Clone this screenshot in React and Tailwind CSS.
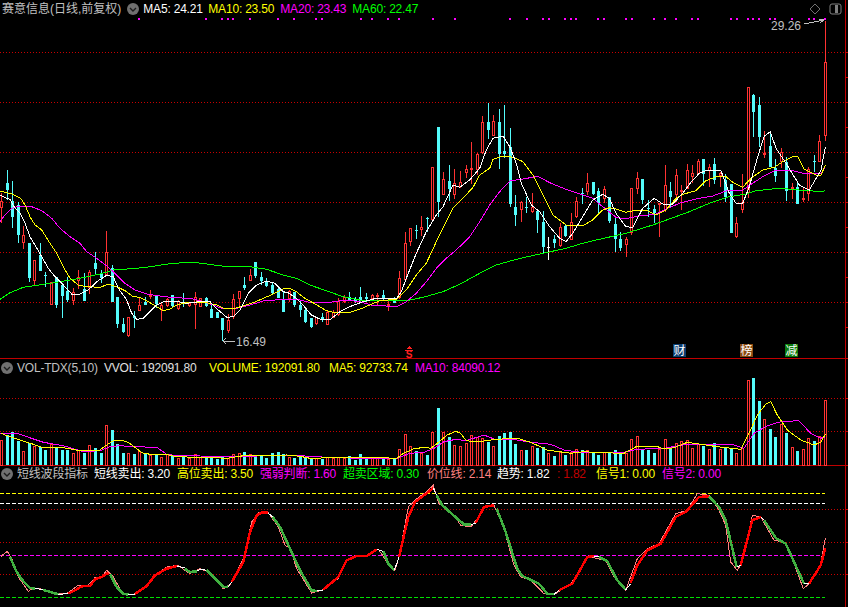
const STEP = 5.53

// candle data, [body top, body bottom, high, low, colour], read off in 3x zoom units
const CANDLES_A = [
  [92, 114, 70, 160, 'r'], [40, 60, 0, 90, 'c'], [92, 140, 32, 175, 'c'], [105, 195, 95, 218, 'c'], [195, 218, 168, 236, 'r'],
  [218, 325, 218, 335, 'c'], [270, 332, 270, 348, 'r'], [255, 303, 220, 303, 'c'], [315, 318, 305, 352, 'c'], [335, 404, 335, 404, 'r'],
  [320, 404, 320, 415, 'c'], [345, 378, 340, 445, 'c'], [362, 390, 320, 395, 'c'], [365, 392, 355, 405, 'r'], [320, 332, 300, 358, 'r'],
  [357, 392, 310, 392, 'c'], [307, 355, 300, 372, 'r'], [280, 296, 245, 312, 'c'], [310, 325, 300, 340, 'c'], [247, 315, 183, 318, 'r'],
  [295, 397, 285, 397, 'c'], [382, 462, 382, 475, 'c'], [462, 485, 445, 490, 'c'], [442, 497, 442, 500, 'r'], [437, 445, 422, 473, 'c'],
  [405, 422, 380, 422, 'r'], [395, 405, 380, 405, 'c'], [376, 380, 360, 388, 'r'], [376, 402, 376, 415, 'c'], [404, 420, 395, 452, 'r'],
  [388, 408, 385, 410, 'r'], [376, 408, 376, 410, 'c'], [392, 418, 390, 420, 'r'], [395, 400, 370, 412, 'c'], [398, 407, 395, 410, 'r'],
  [382, 405, 366, 476, 'r'], [385, 410, 383, 412, 'r'], [383, 408, 380, 410, 'c'], [416, 443, 403, 445, 'c'], [426, 443, 426, 445, 'c'],
  [443, 480, 443, 513, 'c'], [450, 482, 432, 490, 'r'], [388, 442, 372, 446, 'r'], [364, 386, 364, 410, 'r'], [345, 353, 320, 360, 'c'],
  [315, 332, 297, 332, 'r'], [277, 318, 277, 325, 'c'], [320, 332, 305, 345, 'c'], [332, 347, 325, 352, 'c'], [345, 370, 340, 375, 'c'],
  [358, 383, 350, 385, 'c'],
]
const CANDLES_B = [
  [600, 636, 575, 636, 'c'], [572, 597, 570, 605, 'r'], [577, 615, 575, 620, 'c'], [615, 630, 600, 652, 'c'], [630, 666, 620, 670, 'c'],
  [655, 680, 655, 684, 'c'], [652, 672, 650, 675, 'r'], [652, 660, 640, 665, 'c'], [635, 674, 632, 675, 'r'], [636, 655, 630, 655, 'r'],
  [602, 646, 595, 648, 'r'], [590, 605, 585, 608, 'r'], [590, 600, 575, 603, 'c'], [597, 605, 590, 610, 'c'], [592, 603, 560, 610, 'c'],
  [590, 596, 578, 605, 'c'], [586, 597, 582, 600, 'r'], [585, 592, 578, 618, 'r'], [586, 597, 570, 600, 'c'], [612, 618, 600, 632, 'r'],
  [600, 608, 590, 610, 'c'], [534, 595, 513, 597, 'r'], [430, 540, 396, 542, 'r'], [385, 425, 385, 438, 'r'], [390, 394, 376, 416, 'c'],
  [381, 389, 348, 408, 'r'], [354, 357, 350, 395, 'c'], [202, 360, 202, 362, 'r'], [82, 305, 82, 350, 'c'], [238, 285, 215, 286, 'r'],
  [242, 268, 195, 303, 'c'], [248, 285, 207, 298, 'r'], [245, 260, 212, 265, 'r'], [207, 218, 195, 235, 'r'], [205, 210, 127, 252, 'r'],
  [163, 210, 158, 225, 'r'], [66, 160, 48, 162, 'r'], [66, 90, 10, 118, 'c'], [64, 107, 45, 107, 'r'], [66, 162, 27, 207, 'c'],
  [153, 163, 15, 175, 'c'], [142, 312, 85, 320, 'c'], [320, 345, 285, 378, 'c'], [306, 330, 302, 365, 'r'], [320, 323, 290, 340, 'c'],
  [320, 335, 280, 340, 'r'], [333, 360, 330, 400, 'c'], [365, 440, 333, 458, 'c'], [440, 442, 412, 480, 'w'], [417, 430, 405, 445, 'c'],
  [382, 438, 368, 440, 'r'], [378, 408, 372, 410, 'c'],
]
const CANDLES_C = [
  [487, 540, 458, 540, 'r'], [423, 472, 410, 475, 'r'], [400, 403, 385, 432, 'c'], [370, 397, 340, 405, 'r'], [367, 402, 367, 405, 'c'],
  [393, 428, 385, 465, 'c'], [388, 418, 378, 430, 'r'], [412, 483, 412, 490, 'c'], [492, 537, 470, 575, 'c'], [537, 565, 517, 573, 'c'],
  [537, 556, 530, 590, 'r'], [385, 520, 385, 525, 'r'], [355, 386, 335, 402, 'r'], [357, 420, 357, 432, 'c'], [445, 448, 420, 470, 'c'],
  [447, 460, 435, 490, 'c'], [430, 436, 430, 530, 'r'], [376, 450, 316, 455, 'r'], [393, 410, 366, 440, 'c'], [346, 406, 327, 425, 'r'],
  [390, 395, 376, 450, 'r'], [330, 386, 312, 388, 'r'], [340, 350, 315, 370, 'r'], [303, 343, 297, 345, 'r'], [298, 343, 298, 378, 'c'],
  [320, 332, 313, 382, 'r'], [312, 360, 295, 372, 'c'], [340, 348, 335, 380, 'r'], [360, 410, 342, 425, 'c'], [372, 518, 372, 518, 'c'],
  [489, 530, 472, 533, 'r'], [430, 450, 343, 458, 'r'], [80, 400, 80, 413, 'r'], [105, 155, 103, 232, 'c'], [135, 230, 112, 262, 'c'],
  [280, 285, 213, 295, 'r'], [258, 322, 222, 322, 'c'], [325, 347, 297, 365, 'c'], [275, 305, 265, 325, 'r'], [305, 392, 292, 422, 'c'],
  [382, 387, 370, 418, 'r'], [380, 433, 368, 433, 'c'], [415, 418, 380, 425, 'r'], [328, 402, 320, 423, 'r'], [302, 305, 285, 335, 'c'],
  [244, 305, 225, 306, 'r'], [7, 228, -117, 242, 'r'],
]

const toPx = (list, off) => list.map(([a, b, c, d, k]) => [off + a / 3, off + b / 3, off + c / 3, off + d / 3, k])
const CANDLES = [...toPx(CANDLES_A, 170), ...toPx(CANDLES_B, 100), ...toPx(CANDLES_C, 60)]

const VOLUMES = [
  'r255', 'c240', 'c232', 'c258', 'r288', 'c263', 'r272', 'c275', 'c285', 'r268', 'c280', 'c285', 'c285', 'r293', 'r285', 'c293', 'r270', 'c280', 'c293', 'r210',
  'c225', 'c268', 'c293', 'r295', 'c297', 'r288', 'c298', 'r300', 'c298', 'r305', 'r298', 'c303', 'r310', 'c305', 'r308', 'r297', 'r305', 'c308', 'c305', 'c312',
  'c305', 'r310', 'r297', 'r295', 'c291', 'r298', 'c303', 'c300', 'c308', 'c295', 'c291', 'c298', 'r305', 'c310', 'c305', 'c308', 'c312', 'r310', 'c312', 'r305',
  'r310', 'r307', 'r310', 'c303', 'c315', 'c298', 'c310', 'r310', 'r310', 'c310', 'r312', 'c310', 'r283', 'r237', 'r273', 'c288', 'r295', 'c300', 'r230', 'c158',
  'r230', 'c245', 'r270', 'r273', 'r264', 'r240', 'r245', 'r250', 'c260', 'r273', 'c243', 'c233', 'c230', 'c267', 'r285', 'c285', 'r272', 'c280', 'c276', 'r293',
  'c303', 'r290', 'c300', 'r290', 'r282', 'c285', 'r285', 'c294', 'c300', 'r292', 'c292', 'c285', 'c295', 'r293', 'r252', 'r243', 'c285', 'c285', 'c293', 'r283',
  'r252', 'c280', 'r265', 'r258', 'r255', 'r278', 'r268', 'c272', 'r282', 'c265', 'r282', 'c278', 'c278', 'r295', 'r280', 'r75', 'c68', 'c138', 'r192', 'c222',
  'c245', 'r208', 'c233', 'r277', 'c288', 'r283', 'r250', 'c258', 'r243', 'r135',
]

// polylines in zoom units too: [x offset, y offset, points]
const pts = (xo, yo, str) =>
  str.split(' ').map((p) => {
    const [x, y] = p.split(',').map(Number)
    return `${(xo + x / 3).toFixed(1)},${(yo + y / 3).toFixed(1)}`
  })
const line = (...parts) => parts.flatMap(([xo, yo, s]) => pts(xo, yo, s)).join(' ')

const MA5 = line(
  [0, 170, '0,75 15,83 30,88 45,115 60,130 75,160 90,200 105,225 125,260 145,295 165,320 190,345 215,372 240,372 265,360 290,335 320,316 340,320 355,355 380,390 395,430 410,448 430,445 450,425 470,405 490,395 530,394 560,400 600,395 630,395 655,420 680,442 700,440 720,420 745,370 770,345 800,333 825,340 849,365'],
  [283, 100, '15,578 40,595 60,615 85,645 110,657 140,660 170,635 200,620 240,605 280,595 340,597 355,575 370,535 400,460 430,395 460,345 480,320 510,255 530,262 560,240 590,205 610,150 630,115 660,108 680,140 700,190 715,250 745,315 770,335 800,380 830,415 849,425'],
  [566, 60, '20,520 50,470 80,420 110,403 130,415 150,460 180,500 200,502 230,445 265,415 290,432 320,432 350,400 375,367 400,340 425,330 465,332 490,400 510,430 530,430 550,380 575,290 595,228 613,215 630,265 660,310 700,375 730,390 765,330 778,262'],
)
const MA10 = line(
  [0, 170, '0,63 35,72 62,85 75,105 90,140 105,165 125,180 150,220 170,250 190,290 210,325 235,345 260,350 300,352 325,343 350,350 375,362 400,380 420,382 450,398 470,410 490,422 510,417 530,405 560,398 590,396 620,398 650,405 670,415 700,416 730,408 760,398 790,385 820,372 849,357'],
  [283, 100, '20,565 40,575 70,598 90,608 130,632 150,637 200,637 230,628 260,615 290,602 340,598 370,570 400,525 430,490 460,425 490,365 510,325 540,295 570,262 590,225 620,205 630,178 660,168 690,172 720,185 750,225 780,285 810,345 849,375'],
  [566, 60, '50,497 80,480 110,450 130,443 150,447 180,457 210,450 240,450 270,465 300,450 330,415 350,403 390,392 420,362 450,350 480,350 500,367 530,382 555,355 590,330 625,322 650,305 680,290 695,290 715,328 750,345 765,345 778,316'],
)
const MA20 = line(
  [0, 170, '0,155 15,135 35,115 60,108 95,110 125,122 155,145 180,175 210,200 240,220 260,245 290,265 320,288 345,310 375,340 405,360 440,372 480,378 520,383 570,385 600,392 640,405 670,417 710,415 750,405 790,393 849,388'],
  [283, 100, '50,600 85,608 140,607 190,600 230,605 265,615 340,620 370,605 400,580 430,545 460,505 490,475 520,450 560,410 590,365 620,315 650,275 680,243 720,237 765,229 800,248 849,268'],
  [566, 60, '50,405 80,415 110,440 150,472 175,477 220,468 270,462 300,447 345,428 400,415 440,408 480,393 530,390 560,370 590,350 630,330 680,332 720,342 765,340 778,320'],
)
const MA60 = line(
  [0, 170, '0,388 30,368 70,352 130,343 180,335 240,325 300,312 340,300 380,297 430,293 470,287 520,280 580,277 620,282 680,290 750,290 800,298 849,315'],
  [283, 100, '40,535 80,555 130,572 180,590 230,600 300,602 370,602 420,592 480,575 530,553 590,520 640,495 700,478 770,462 849,445'],
  [566, 60, '50,550 100,538 180,520 260,495 370,455 430,430 490,410 540,402 570,392 640,385 700,390 770,395 778,391'],
)
const VOL_MA5 = line(
  [0, 355, '3,235 15,240 40,248 70,258 100,268 130,278 190,278 240,287 300,285 320,270 340,257 370,257 385,262 405,277 425,293 450,298 500,298 520,303 560,306 600,306 680,310 720,304 740,300 790,300 820,302 860,300 900,304 930,310 1000,308 1060,307 1100,308 1140,308 1190,310 1210,295 1240,282'],
  [424, 355, '0,277 20,280 40,265 70,240 95,229 110,235 125,255 140,260 180,258 215,253 280,250 320,262 370,285 440,295 480,290 530,293 600,295 640,273 695,273 720,282 750,278 790,262 830,268 880,275 950,283 975,235 1000,180 1025,148 1040,140 1060,180 1090,225 1130,255 1170,270 1190,262 1204,238'],
)
const VOL_MA10 = line(
  [0, 355, '0,235 50,235 80,245 130,262 190,272 250,290 300,287 330,275 360,272 400,275 470,277 500,298 530,302 600,303 700,305 800,302 900,302 1000,308 1100,310 1190,310 1230,295'],
  [424, 355, '0,292 30,280 60,260 90,254 130,256 180,240 210,252 280,255 320,262 380,268 420,285 470,292 600,292 640,283 720,280 790,268 930,270 960,280 990,235 1030,212 1070,200 1125,197 1160,235 1190,250 1204,245'],
)
const SWING_THIN = line(
  [0, 462, '3,283 22,268 35,290 55,345 85,388 100,378 130,382 170,395 200,395 235,370 260,373 285,347 305,345 320,325 340,345 370,398 400,398 440,370 470,335 505,313 535,311 570,335 600,320 625,330 670,380 690,370 730,290 755,180 775,152 805,152 835,195 855,250 870,258 890,320 935,393 965,385 990,365 1015,350 1040,295 1070,282 1100,280 1135,262 1165,305 1185,325 1197,285 1225,135 1250,110'],
  [424, 462, '0,95 28,70 45,125 60,135 100,175 110,190 140,195 160,170 180,133 210,130 240,200 270,310 290,345 320,355 360,395 395,395 440,365 495,282 520,290 545,295 570,345 605,385 640,290 670,260 705,245 755,155 790,145 820,95 855,100 885,145 905,190 920,300 940,325 955,300 985,160 1010,165 1050,235 1080,240 1105,290 1138,380 1155,365 1190,305 1204,228'],
)

const RED = '#ff0000'
const GREEN = '#40b040'
const WHITE = '#ffffff'
// thick line of the indicator, one run per colour
const SWING_RUNS = [
  [0, GREEN, '30,285 50,330 70,358 90,378 105,380'], [0, WHITE, '105,380 130,382'], [0, GREEN, '130,384 175,397'], [0, WHITE, '175,397 205,395'],
  [0, RED, '205,395 225,385 245,373 270,372 285,352 305,345 325,332'], [0, GREEN, '330,337 350,375 370,395 385,398'], [0, WHITE, '385,398 405,396'],
  [0, RED, '405,396 440,372 465,340 500,320 530,312'], [0, WHITE, '530,312 555,318'], [0, GREEN, '555,320 570,330 590,328'], [0, WHITE, '590,328 600,322 620,325'],
  [0, GREEN, '620,325 650,355 670,375 685,374'], [0, WHITE, '685,374 695,360'], [0, RED, '695,360 730,300 750,210 770,160 785,152 803,152'], [0, WHITE, '803,152 818,165'],
  [0, GREEN, '818,165 840,195 870,260 900,325 935,385 950,387'], [0, WHITE, '950,387 970,385'], [0, RED, '970,383 1015,345 1040,295 1070,282 1100,282 1130,262'], [0, WHITE, '1130,262 1150,268'],
  [0, GREEN, '1150,268 1165,305 1183,325'], [0, WHITE, '1183,325 1197,285'], [0, RED, '1197,285 1225,165 1245,120 1272,100'],
  [424, RED, '0,100 28,78'], [424, WHITE, '28,78 38,100'], [424, GREEN, '38,100 55,130 100,170 120,187 140,188'], [424, WHITE, '140,188 155,183'],
  [424, RED, '155,183 180,135 210,130'], [424, GREEN, '218,140 245,210 280,320 295,342 345,365 370,395 390,397'], [424, WHITE, '390,397 405,385'],
  [424, RED, '405,385 445,365 490,285 510,282'], [424, WHITE, '510,282 525,285'], [424, GREEN, '525,285 550,298 580,355 605,383'], [424, WHITE, '605,383 620,365'],
  [424, RED, '620,362 640,310 670,265 710,245 755,165 785,150 825,105 855,103'], [424, GREEN, '855,103 885,135 905,175 938,315'], [424, WHITE, '938,315 950,310'],
  [424, RED, '950,310 985,175 1010,165'], [424, WHITE, '1010,165 1020,175'], [424, GREEN, '1020,175 1055,228 1085,245 1140,365'], [424, WHITE, '1140,365 1155,365'],
  [424, RED, '1155,365 1190,310 1204,258'],
]

const EVENT_DOTS = [
  139, 206, 222, 228, 233, 250, 278, 294, 316, 322, 361, 372, 388, 399, 433, 455, 510, 527, 543, 549, 565, 571, 576, 598, 604, 626, 632, 654, 665, 676, 692, 698,
  731, 737, 748, 753, 759, 770, 775, 792, 809, 814, 825,
]

const GRID_RED = '#c80000'
const UP = '#ff3232'
const DOWN = '#54fcfc'

const barX = (i) => Math.round(1 + STEP * i)

function Chevron() {
  return (
    <svg width="12" height="12" viewBox="0 0 12 12" className="shrink-0">
      <circle cx="6" cy="6" r="6" fill="#707070" />
      <path d="M3 5 L6 8 L9 5" fill="none" stroke="#1c1c1c" strokeWidth="1.4" />
    </svg>
  )
}

function Grid({ ys, color = GRID_RED, dash = '1 2', x2 = 845 }) {
  return ys.map((y) => (
    <line key={y} x1="0" x2={x2} y1={y + 0.5} y2={y + 0.5} stroke={color} strokeDasharray={dash} />
  ))
}

function Ticks({ ys }) {
  return ys.map((y) => <rect key={y} x="846" y={y} width="2" height="1" fill={GRID_RED} />)
}

function Curve({ points, color, width = 1 }) {
  return <polyline points={points} fill="none" stroke={color} strokeWidth={width} />
}

function Candle({ c, i }) {
  const [top, bottom, high, low, kind] = c
  const x = barX(i)
  const t = Math.round(top)
  const h = Math.max(Math.round(bottom) - t, 1)
  const color = kind === 'r' ? UP : kind === 'c' ? DOWN : '#ffffff'
  return (
    <g>
      <rect x={x} y={Math.round(high)} width="1" height={Math.round(low) - Math.round(high)} fill={color} />
      {kind === 'r' ? (
        <rect x={x - 0.5} y={t + 0.5} width="2" height={Math.max(h - 1, 1)} fill="#000" stroke={color} />
      ) : (
        <rect x={x - 1} y={t} width="3" height={h} fill={color} />
      )}
    </g>
  )
}

function MarkerTag({ x, bg, children }) {
  return (
    <g>
      <rect x={x - 7} y="344" width="13" height="13" fill={bg} />
      <text x={x - 0.5} y="355" textAnchor="middle" fontSize="12" fill="#fff">
        {children}
      </text>
    </g>
  )
}

function PriceChart() {
  return (
    <svg width="845" height="341" viewBox="0 17 845 341" className="block overflow-visible" shapeRendering="crispEdges">
      <Grid ys={[52, 102, 152, 202, 252, 302]} />
      <Ticks ys={[52, 77, 102, 127, 152, 177, 202, 227, 252, 277, 302, 327]} />
      {EVENT_DOTS.map((x) => (
        <rect key={x} x={x - 1} y="18" width="2" height="2" fill="#ff00ff" />
      ))}
      {CANDLES.map((c, i) => (
        <Candle key={i} c={c} i={i} />
      ))}
      <Curve points={MA60} color="#00ff00" />
      <Curve points={MA20} color="#ff00ff" />
      <Curve points={MA10} color="#ffff00" />
      <Curve points={MA5} color="#ffffff" />

      <text x="771" y="30" fontSize="12" fill="#c0c0c0">29.26</text>
      <path d="M804 24 L824 20 M819 19 L824 20 L820 23" fill="none" stroke="#c0c0c0" />
      <text x="236" y="346" fontSize="12" fill="#c0c0c0">16.49</text>
      <path d="M223 341 L235 341 M226 338 L223 341 L226 344" fill="none" stroke="#c0c0c0" />

      <path d="M409 346 L412 349 L406 349 Z" fill="#ff2020" />
      <rect x="405" y="350" width="8" height="1" fill="#ff2020" />
      <text x="409" y="358" textAnchor="middle" fontSize="10" fontWeight="700" fill="#ff2020">S</text>
      <MarkerTag x={680} bg="#0b3d70">财</MarkerTag>
      <MarkerTag x={747} bg="#8a4a10">榜</MarkerTag>
      <MarkerTag x={792} bg="#0a7a0a">减</MarkerTag>
    </svg>
  )
}

function VolumeChart() {
  return (
    <svg width="845" height="90" viewBox="0 375 845 90" className="block overflow-visible" shapeRendering="crispEdges">
      <Grid ys={[398, 431]} />
      <Ticks ys={[398, 431]} />
      {VOLUMES.map((v, i) => {
        const kind = v[0]
        const top = Math.round(355 + Number(v.slice(1)) / 3)
        const x = barX(i)
        return kind === 'r' ? (
          <rect key={i} x={x - 0.5} y={top + 0.5} width="2" height={465 - top} fill="#000" stroke={UP} />
        ) : (
          <rect key={i} x={x - 1} y={top} width="3" height={465 - top} fill={DOWN} />
        )
      })}
      <Curve points={VOL_MA10} color="#ff00ff" />
      <Curve points={VOL_MA5} color="#ffff00" />
    </svg>
  )
}

function SwingChart() {
  return (
    <svg width="845" height="127" viewBox="0 480 845 127" className="block overflow-visible" shapeRendering="crispEdges">
      <Grid ys={[509, 542, 574]} />
      <Grid ys={[493]} color="#ffff00" dash="4 2" x2={825} />
      <Grid ys={[503]} color="#ffffff" dash="4 2" x2={825} />
      <Grid ys={[555]} color="#ff00ff" dash="4 2" x2={825} />
      <Grid ys={[597]} color="#00e000" dash="4 2" x2={825} />
      <Ticks ys={[509, 542, 574]} />
      <Curve points={SWING_THIN} color="#ff8080" />
      {SWING_RUNS.map(([xo, color, s], i) => (
        <Curve key={i} points={pts(xo, 462, s).join(' ')} color={color} width={color === WHITE ? 1 : 2.5} />
      ))}
    </svg>
  )
}

function Field({ color, width, children }) {
  return (
    <span className={`whitespace-pre tracking-[-0.2px] ${width}`} style={{ color }}>
      {children}
    </span>
  )
}

function Panel({ height, header, children }) {
  return (
    <div className={`flex border-b border-[#c00000] ${height}`}>
      <div className="w-[845px] flex flex-col">
        {header}
        {children}
      </div>
      <div className="flex-1 border-l border-[#c00000]" />
    </div>
  )
}

export default function App() {
  return (
    <div className="w-[848px] h-[607px] overflow-hidden bg-black text-xs leading-none font-['Liberation_Sans','Noto_Sans_CJK_SC',sans-serif]">
      <Panel
        height="h-[359px]"
        header={
          <div className="h-[17px] flex items-center pt-[1px] pl-[2px] pr-[3px]">
            <span className="text-[#c0c0c0] mr-[6px]">赛意信息(日线,前复权)</span>
            <Chevron />
            <div className="flex ml-[4px]">
              <Field color="#ffffff" width="w-[65px]">MA5: 24.21</Field>
              <Field color="#ffff00" width="w-[72px]">MA10: 23.50</Field>
              <Field color="#ff00ff" width="w-[72px]">MA20: 23.43</Field>
              <Field color="#00ff00">MA60: 22.47</Field>
            </div>
            <div className="ml-auto flex items-center gap-[8px]">
              <svg width="12" height="12" viewBox="0 0 12 12">
                <path d="M6 1 L11 6 L6 11 L1 6 Z" fill="none" stroke="#707070" />
              </svg>
              <svg width="13" height="12" viewBox="0 0 13 12">
                <rect x="1" y="1" width="11" height="10" rx="2" fill="none" stroke="#808080" />
                <rect x="6" y="2" width="3" height="8" fill="#808080" />
              </svg>
            </div>
          </div>
        }
      >
        <PriceChart />
      </Panel>
      <Panel
        height="h-[107px]"
        header={
          <div className="h-[16px] flex items-center pt-[1px] pl-[1px]">
            <Chevron />
            <div className="flex ml-[4px]">
              <Field color="#c0c0c0" width="w-[87px]">VOL-TDX(5,10)</Field>
              <Field color="#e0e0e0" width="w-[105px]">VVOL: 192091.80</Field>
              <Field color="#ffff00" width="w-[120px]">VOLUME: 192091.80</Field>
              <Field color="#ffff00" width="w-[86px]">MA5: 92733.74</Field>
              <Field color="#ff00ff">MA10: 84090.12</Field>
            </div>
          </div>
        }
      >
        <VolumeChart />
      </Panel>
      <div className="w-[848px] flex">
        <div className="w-[845px] flex flex-col">
          <div className="h-[14px] flex items-center pt-[2px] pl-[1px]">
            <Chevron />
            <div className="flex ml-[4px]">
              <Field color="#c0c0c0" width="w-[77px]">短线波段指标</Field>
              <Field color="#ffffff" width="w-[83px]">短线卖出: 3.20</Field>
              <Field color="#ffff00" width="w-[83px]">高位卖出: 3.50</Field>
              <Field color="#ff00ff" width="w-[83px]">强弱判断: 1.60</Field>
              <Field color="#00ff00" width="w-[84px]">超卖区域: 0.30</Field>
              <Field color="#ff8080" width="w-[70px]">价位线: 2.14</Field>
              <Field color="#ffffff" width="w-[60px]">趋势: 1.82</Field>
              <Field color="#c00000" width="w-[39px]">: 1.82</Field>
              <Field color="#ffff00" width="w-[66px]">信号1: 0.00</Field>
              <Field color="#ff00ff">信号2: 0.00</Field>
            </div>
          </div>
          <SwingChart />
        </div>
        <div className="flex-1 border-l border-[#c00000]" />
      </div>
    </div>
  )
}
